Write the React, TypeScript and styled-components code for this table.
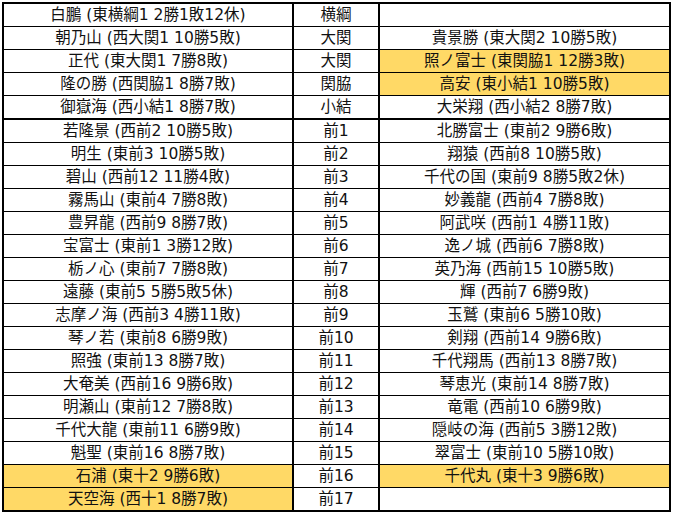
import styled, { createGlobalStyle } from 'styled-components'

const GlobalStyle = createGlobalStyle`
	html, body {
		margin: 0;
		padding: 0;
		background: #ffffff;
	}
	body {
		font-family: 'DejaVu Sans', 'Noto Sans CJK JP', sans-serif;
		color: #111111;
	}
`

type Cell = { text: string; hl?: boolean }
type Entry = [Cell, string, Cell]

const c = (text: string, hl = false): Cell => ({ text, hl })

const rows: Entry[] = [
	[c('白鵬 (東横綱1 2勝1敗12休)'), '横綱', c('')],
	[c('朝乃山 (西大関1 10勝5敗)'), '大関', c('貴景勝 (東大関2 10勝5敗)')],
	[c('正代 (東大関1 7勝8敗)'), '大関', c('照ノ富士 (東関脇1 12勝3敗)', true)],
	[c('隆の勝 (西関脇1 8勝7敗)'), '関脇', c('高安 (東小結1 10勝5敗)', true)],
	[c('御嶽海 (西小結1 8勝7敗)'), '小結', c('大栄翔 (西小結2 8勝7敗)')],
	[c('若隆景 (西前2 10勝5敗)'), '前1', c('北勝富士 (東前2 9勝6敗)')],
	[c('明生 (東前3 10勝5敗)'), '前2', c('翔猿 (西前8 10勝5敗)')],
	[c('碧山 (西前12 11勝4敗)'), '前3', c('千代の国 (東前9 8勝5敗2休)')],
	[c('霧馬山 (東前4 7勝8敗)'), '前4', c('妙義龍 (西前4 7勝8敗)')],
	[c('豊昇龍 (西前9 8勝7敗)'), '前5', c('阿武咲 (西前1 4勝11敗)')],
	[c('宝富士 (東前1 3勝12敗)'), '前6', c('逸ノ城 (西前6 7勝8敗)')],
	[c('栃ノ心 (東前7 7勝8敗)'), '前7', c('英乃海 (西前15 10勝5敗)')],
	[c('遠藤 (東前5 5勝5敗5休)'), '前8', c('輝 (西前7 6勝9敗)')],
	[c('志摩ノ海 (西前3 4勝11敗)'), '前9', c('玉鷲 (東前6 5勝10敗)')],
	[c('琴ノ若 (東前8 6勝9敗)'), '前10', c('剣翔 (西前14 9勝6敗)')],
	[c('照強 (東前13 8勝7敗)'), '前11', c('千代翔馬 (西前13 8勝7敗)')],
	[c('大奄美 (西前16 9勝6敗)'), '前12', c('琴恵光 (東前14 8勝7敗)')],
	[c('明瀬山 (東前12 7勝8敗)'), '前13', c('竜電 (西前10 6勝9敗)')],
	[c('千代大龍 (東前11 6勝9敗)'), '前14', c('隠岐の海 (西前5 3勝12敗)')],
	[c('魁聖 (東前16 8勝7敗)'), '前15', c('翠富士 (東前10 5勝10敗)')],
	[c('石浦 (東十2 9勝6敗)', true), '前16', c('千代丸 (東十3 9勝6敗)', true)],
	[c('天空海 (西十1 8勝7敗)', true), '前17', c('')],
]

export default function App() {
	return (
		<>
			<GlobalStyle />
			<Sheet>
				{rows.map(([east, rank, west], i) => (
					<Row key={i} $thick={i === 4}>
						<NameCell $width={288} $hl={east.hl}>
							{east.text}
						</NameCell>
						<RankCell>{rank}</RankCell>
						<NameCell $width={289} $last $hl={west.hl}>
							{west.text}
						</NameCell>
					</Row>
				))}
			</Sheet>
		</>
	)
}

const Sheet = styled.div`
	display: inline-flex;
	flex-direction: column;
	margin: 2px;
	border: 2px solid #000000;
	background: #ffffff;
`

const Row = styled.div<{ $thick?: boolean }>`
	display: flex;
	border-bottom: ${({ $thick }) => ($thick ? '2px' : '1px')} solid #000000;

	&:last-child {
		border-bottom: none;
	}
`

const BaseCell = styled.div`
	height: 22px;
	display: flex;
	align-items: center;
	justify-content: center;
	font-size: 15.5px;
	line-height: 22px;
	white-space: nowrap;
	overflow: hidden;
`

const NameCell = styled(BaseCell)<{ $width: number; $hl?: boolean; $last?: boolean }>`
	width: ${({ $width }) => $width}px;
	background: ${({ $hl }) => ($hl ? '#ffd966' : '#ffffff')};
	border-right: ${({ $last }) => ($last ? 'none' : '2px solid #000000')};
`

const RankCell = styled(BaseCell)`
	width: 84px;
	border-right: 2px solid #000000;
`
